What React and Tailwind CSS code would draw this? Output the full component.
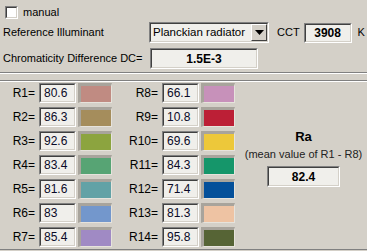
import React from "react";

const left = [
  ["R1=", "80.6", "#c08b82"],
  ["R2=", "86.3", "#a58d5c"],
  ["R3=", "92.6", "#8ca43f"],
  ["R4=", "83.4", "#57a474"],
  ["R5=", "81.6", "#62a2a6"],
  ["R6=", "83", "#7397cc"],
  ["R7=", "85.4", "#a08ac4"],
];
const right = [
  ["R8=", "66.1", "#c791ba"],
  ["R9=", "10.8", "#bc1f36"],
  ["R10=", "69.6", "#edc83a"],
  ["R11=", "84.3", "#15966a"],
  ["R12=", "71.4", "#04509a"],
  ["R13=", "81.3", "#eec3a3"],
  ["R14=", "95.8", "#566435"],
];

function Sunken({ className = "", children }) {
  return (
    <div className={"border border-t-[#808080] border-l-[#808080] border-b-white border-r-white " + className}>
      <div className="w-full h-full border border-t-[#404040] border-l-[#404040] border-b-[#d4d0c8] border-r-[#d4d0c8] bg-[#f0efeb] flex items-center">
        {children}
      </div>
    </div>
  );
}

function Swatch({ color }) {
  return (
    <div className="w-[34px] h-[20px] border-t-[3px] border-l-[3px] border-r border-b border-t-[#a8a49c] border-l-[#a8a49c] border-r-[#e6e3dc] border-b-[#e6e3dc]">
      <div className="w-full h-full" style={{ backgroundColor: color }} />
    </div>
  );
}

function Row({ label, value, color, labelW }) {
  return (
    <div className="flex items-center h-[20px]">
      <div className={"text-right text-[12px] pr-[4px] " + labelW}>{label}</div>
      <Sunken className="w-[37px] h-[20px]">
        <span className="pl-[3px] text-[12px] text-[#0a0a28]">{value}</span>
      </Sunken>
      <div className="ml-[2px]">
        <Swatch color={color} />
      </div>
    </div>
  );
}

export default function App() {
  return (
    <div className="w-[367px] h-[251px] bg-[#d4d0c8] overflow-hidden text-[11px] text-black whitespace-nowrap" style={{ fontFamily: '"Liberation Sans", Arial, sans-serif' }}>
      <div className="h-[74px] flex flex-col border-b border-b-white">
        <div className="h-[73px] flex flex-col border-b border-b-[#808080]">
          <div className="flex items-center mt-[6px] ml-[5px] h-[13px]">
            <div className="w-[13px] h-[13px] border border-t-[#808080] border-l-[#808080] border-b-white border-r-white">
              <div className="w-full h-full bg-white border border-t-[#404040] border-l-[#404040] border-b-[#d4d0c8] border-r-[#d4d0c8]" />
            </div>
            <span className="ml-[5px]">manual</span>
          </div>
          <div className="flex items-center mt-[3px] h-[21px]">
            <div className="w-[149px] pl-[3px]">Reference Illuminant</div>
            <Sunken className="w-[120px] h-[21px]">
              <span className="flex-1 pl-[2px] text-[11.5px]">Planckian radiator</span>
              <div className="w-[16px] h-[17px] bg-[#d4d0c8] border border-t-white border-l-white border-b-[#404040] border-r-[#404040] flex items-center justify-center">
                <svg width="9" height="5" viewBox="0 0 9 5"><path d="M0 0h9L4.5 5z" fill="#000" /></svg>
              </div>
            </Sunken>
            <span className="ml-[8px]">CCT</span>
            <Sunken className="ml-[4px] w-[48px] h-[20px]">
              <span className="w-full text-center font-bold text-[12px]">3908</span>
            </Sunken>
            <span className="ml-[6px]">K</span>
          </div>
          <div className="flex items-center mt-[5px] h-[21px]">
            <div className="w-[150px] pl-[3px]">Chromaticity Difference DC=</div>
            <Sunken className="w-[108px] h-[21px]">
              <span className="w-full text-center font-bold text-[12px]">1.5E-3</span>
            </Sunken>
          </div>
        </div>
      </div>
      <div className="mt-[6px] h-[171px] border-t border-t-[#808080]">
        <div className="h-full border-t border-t-white flex">
          <div className="h-[168px] w-full border-b border-b-[#808080] flex pt-[1px]">
            <div className="flex flex-col gap-[4px] w-[120px]">
              {left.map(([l, v, c]) => (
                <Row key={l} label={l} value={v} color={c} labelW="w-[39px]" />
              ))}
            </div>
            <div className="flex flex-col gap-[4px] w-[120px]">
              {right.map(([l, v, c]) => (
                <Row key={l} label={l} value={v} color={c} labelW="w-[42px]" />
              ))}
            </div>
            <div className="flex-1 flex flex-col items-center pt-[46px]">
              <div className="font-bold text-[13px] leading-[16px]">Ra</div>
              <div className="mt-[2px] text-[11px] leading-[14px] text-[#222]">(mean value of R1 - R8)</div>
              <Sunken className="mt-[5px] w-[73px] h-[21px]">
                <span className="w-full text-center font-bold text-[12px]">82.4</span>
              </Sunken>
            </div>
          </div>
        </div>
      </div>
    </div>
  );
}
